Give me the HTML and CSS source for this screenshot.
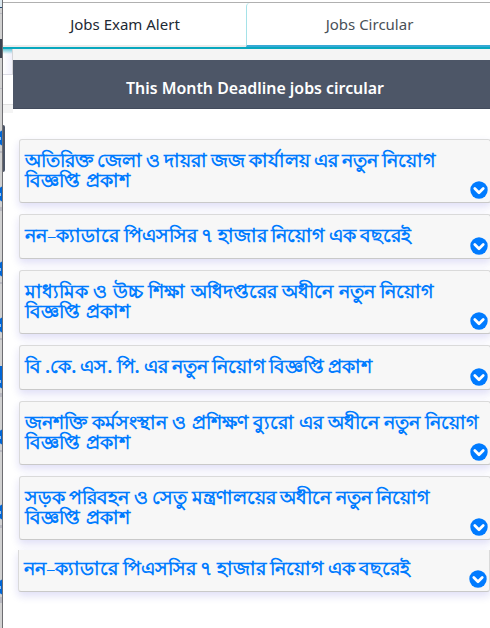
FILE: index.html
```html
<!DOCTYPE html>
<html lang="bn">
<head>
<meta charset="utf-8">
<title>Jobs Circular</title>
<link rel="stylesheet" href="styles.css">
</head>
<body>
<svg width="0" height="0" class="defs" aria-hidden="true">
  <symbol id="chevron" viewBox="0 0 18 18">
    <circle cx="9" cy="9" r="8.7" fill="#007bff"/>
    <path d="M4.8 7.6 9 11.7l4.2-4.1" fill="none" stroke="#fff" stroke-width="2.8" stroke-linecap="round" stroke-linejoin="round"/>
  </symbol>
</svg>
<div class="app">
  <svg class="rail" width="3" height="628" viewBox="0 0 3 628" aria-hidden="true">
    <rect width="3" height="628" fill="#d1d1d1"/>
    <path fill="#b8b8c0" d="M0 13h2v1H0zM0 88h2v1H0zM0 151h2v2H0zM0 207h2v4H0zM0 282h2v2H0zM0 338h2v2H0zM0 393h2v4H0zM0 450h2v2H0zM0 525h2v3H0zM0 597h2v6H0z"/>
    <path fill="#dce8ef" d="M0 0h2v7H0z"/>
    <path fill="#234b78" d="M0 7h2v1H0z"/>
    <path fill="#3c4350" d="M0 39h2v19H0z"/>
    <g fill="#0066d6">
      <circle cx="5" cy="138" r="8"/><circle cx="5" cy="194" r="8"/><circle cx="5" cy="269" r="8"/><circle cx="5" cy="325" r="8"/>
      <path d="M0 366h2v9H0z"/><circle cx="5" cy="381" r="8"/><circle cx="5" cy="437" r="8"/><circle cx="5" cy="512" r="8"/><circle cx="5" cy="587" r="8"/>
    </g>
    <path fill="#fff" d="M0 137h1v3H0zM0 193h1v3H0zM0 268h1v3H0zM0 324h1v3H0zM0 380h1v3H0zM0 436h1v3H0zM0 511h1v3H0zM0 586h1v3H0z" opacity=".6"/>
    <path fill="#6e6e72" d="M2 0h1v628H2z"/>
  </svg>
  <div class="page">
    <nav class="tabs">
      <a class="tab">Jobs Exam Alert</a>
      <a class="tab active">Jobs Circular</a>
    </nav>
    <div class="banner">
      <div class="edge"><div class="edge-card"></div><div class="edge-foot"></div></div>
      <h1>This Month Deadline jobs circular</h1>
    </div>
    <div class="marker"></div>
    <main class="list">
      <article class="card tight"><h2>অতিরিক্ত জেলা ও দায়রা জজ কার্যালয় এর নতুন নিয়োগ<br><span>বিজ্ঞপ্তি প্রকাশ</span></h2><svg class="icon"><use href="#chevron"/></svg></article>
      <article class="card short snug"><h2>নন<i>–</i>ক্যাডারে পিএসসির ৭ হাজার নিয়োগ এক বছরেই</h2><svg class="icon"><use href="#chevron"/></svg></article>
      <article class="card loose"><h2>মাধ্যমিক ও উচ্চ শিক্ষা অধিদপ্তরের অধীনে নতুন নিয়োগ<br><span>বিজ্ঞপ্তি প্রকাশ</span></h2><svg class="icon"><use href="#chevron"/></svg></article>
      <article class="card short tight"><h2>বি .কে. এস. পি. এর নতুন নিয়োগ বিজ্ঞপ্তি প্রকাশ</h2><svg class="icon"><use href="#chevron"/></svg></article>
      <article class="card wide"><h2>জনশক্তি কর্মসংস্থান ও প্রশিক্ষণ ব্যুরো এর অধীনে নতুন নিয়োগ<br><span>বিজ্ঞপ্তি প্রকাশ</span></h2><svg class="icon"><use href="#chevron"/></svg></article>
      <article class="card snug"><h2>সড়ক পরিবহন ও সেতু মন্ত্রণালয়ের অধীনে নতুন নিয়োগ<br><span>বিজ্ঞপ্তি প্রকাশ</span></h2><svg class="icon"><use href="#chevron"/></svg></article>
      <article class="card short snug last"><h2>নন<i>–</i>ক্যাডারে পিএসসির ৭ হাজার নিয়োগ এক বছরেই</h2><svg class="icon"><use href="#chevron"/></svg></article>
    </main>
  </div>
</div>
</body>
</html>
```
FILE: styles.css
```css
* { box-sizing: border-box; }
body { margin: 0; background: #fff; font-family: "Noto Sans", "Open Sans", sans-serif; overflow: hidden; }
.defs { position: absolute; }
.app { display: flex; width: 490px; height: 628px; overflow: hidden; }
.rail { flex: none; display: block; }
.page { flex: 1; min-width: 0; }
.tabs { position: relative; z-index: 1; display: flex; height: 49px; background: linear-gradient(#fff 2px, #b0b0b0 2px, #b0b0b0 3px, #fff 3px); border-bottom: 2px solid #08a8be; }
.tab { height: 44px; margin-top: 3px; border-bottom: 2px solid #ebebeb; width: 243px; flex: none; padding-left: 1px; text-align: center; font-size: 15px; line-height: 43px; color: #212934; }
.tab.active { width: 245px; color: #495057; border-left: 1px solid #a5e2e8; border-bottom-color: #36a9d6; border-top-left-radius: 4px; }
.banner { display: flex; position: relative; z-index: 2; height: 64px; }
.edge { width: 10px; flex: none; }
.edge-card { height: 26px; border-right: 1px solid #d5d5d8; border-bottom: 1px solid #dcdce5; background: linear-gradient(#08a8be99, #08a8be00 5px), linear-gradient(90deg, #fff, #f0f0fb); }
.edge-foot { height: 38px; background: linear-gradient(#fff 29px, #e1e1e1 29px, #e1e1e1 30px, #f4f4f4 30px); }
h1 { flex: 1; height: 60px; margin: 0; border-top: 11px solid #f4f4f4; border-bottom: 1px solid #434b5c; background: #4d5667; color: #fff; font-size: 15.9px; font-weight: 600; line-height: 57px; padding-left: 7px; text-align: center; }
.marker { width: 2px; height: 47px; margin-top: 12px; background: #4d5667; border-radius: 0 2px 2px 0; }
.list { display: flex; flex-direction: column; gap: 11px; margin-top: -33px; padding-left: 16px; }
.card { display: flex; height: 64px; width: 472px; border: 1px solid #dadada; border-bottom: 1px solid #c9c9c9; border-radius: 3px; background: #f7f7f7; padding: 11px 2.5px 3px 5px; box-shadow: 0 4px 8px rgba(30, 20, 190, .14); }
.card.short { height: 45px; }
.card.last { margin: -1px 0 0 -1px; height: 42px; border-top: 0; border-radius: 0 0 3px 3px; padding-top: 9px; }
h2 { flex: 1; min-width: 0; margin: 0; font-size: 18.8px; line-height: 19px; font-weight: 600; color: #007bff; white-space: nowrap; }
.tight h2 { word-spacing: -.9px; }
.snug h2 { word-spacing: -.4px; }
.loose h2 { word-spacing: .6px; }
.wide h2 { word-spacing: .3px; }
h2 i { font-style: normal; font-weight: 300; }
.card h2 span { font-size: 19.2px; line-height: 1; word-spacing: 1.5px; }
.icon { width: 18px; height: 18px; flex: none; align-self: flex-end; margin-left: -18px; }
```
